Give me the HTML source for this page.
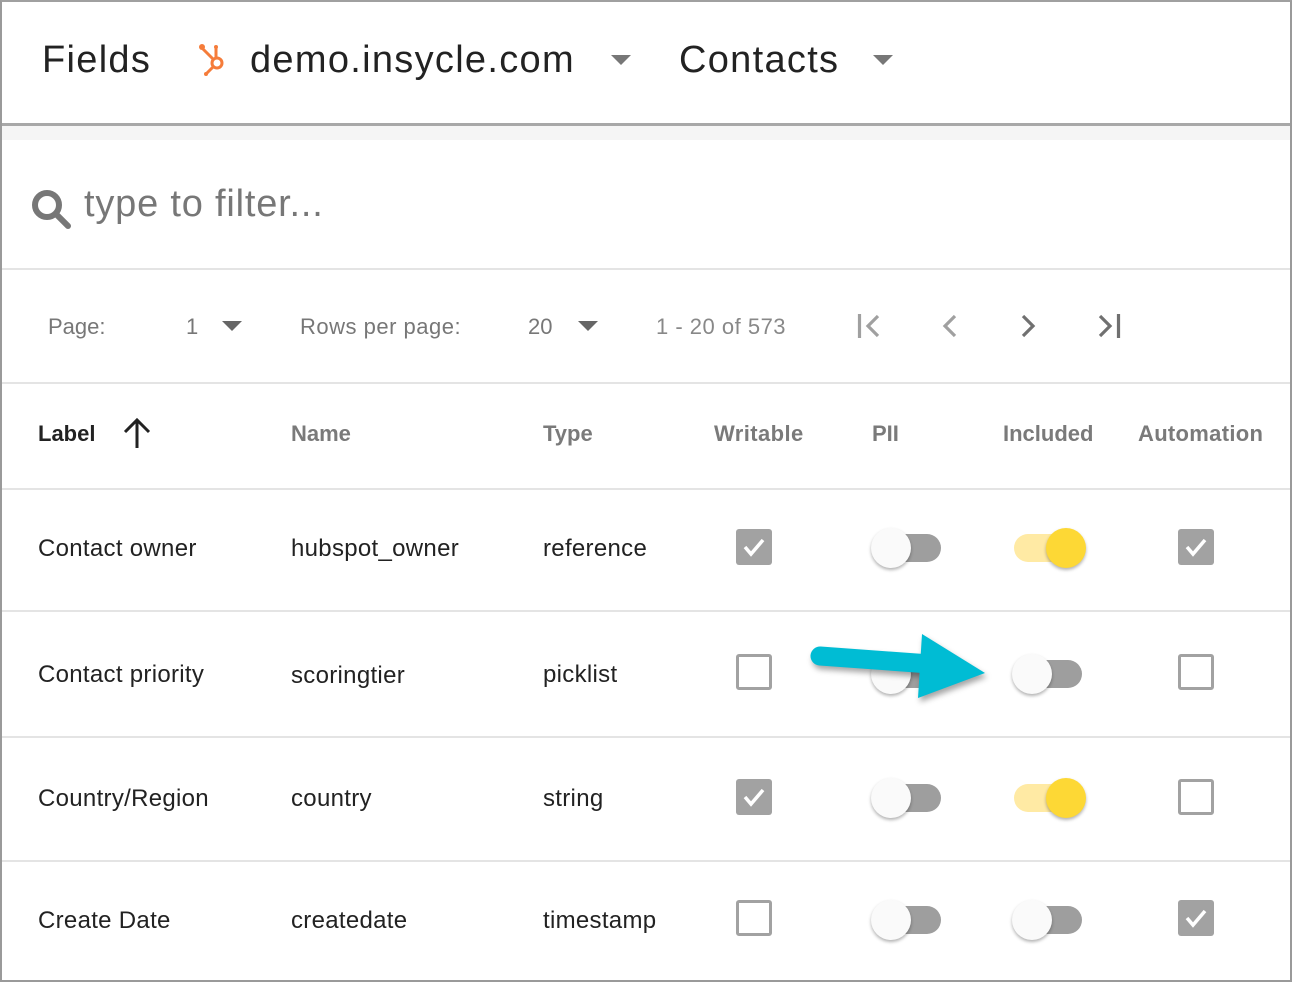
<!DOCTYPE html>
<html><head><meta charset="utf-8"><style>
*{margin:0;padding:0;box-sizing:border-box}
body{width:1292px;height:982px;background:#fff;font-family:"Liberation Sans",Arial,sans-serif;position:relative;overflow:hidden}
.frame{position:absolute;left:0;top:0;width:1292px;height:982px;border:2px solid #9a9a9a;border-top-color:#a0a0a0}
.a{position:absolute;white-space:nowrap}
.hl{position:absolute;left:2px;right:2px;height:2px;background:#e4e4e4}
.t{font-size:24px;color:#222;letter-spacing:0.3px}
.h{font-size:22px;font-weight:bold;color:#7a7a7a}
.cb{position:absolute;width:36px;height:36px;border-radius:3px}
.cb.on{background:#a2a2a2}
.cb.off{border:3px solid #a2a2a2;background:#fff}
.sw{position:absolute;width:70px;height:40px}
.sw .tr{position:absolute;left:2px;top:6px;width:68px;height:28px;border-radius:14px;background:#9e9e9e}
.sw .th{position:absolute;left:0;top:0;width:40px;height:40px;border-radius:50%;background:#fafafa;box-shadow:0 2px 3px rgba(0,0,0,.3)}
.sw.y .tr{background:#ffeaa4;left:0}
.sw.y .th{left:32px;background:#fdd835}
.big{font-size:38px;color:#222;letter-spacing:1.3px}
</style></head><body>
<div class="frame"></div>
<div class="a big" style="left:42px;top:39px">Fields</div>
<svg class="a" style="left:196px;top:40px" width="34" height="36" viewBox="0 0 34 36"><g stroke="#f57c3a" stroke-width="3" fill="none"><circle cx="21" cy="23" r="5"/><line x1="17" y1="19" x2="7" y2="9"/><line x1="20" y1="18" x2="20" y2="8"/><line x1="17" y1="27" x2="11" y2="33"/></g><circle cx="6" cy="7" r="3" fill="#f57c3a"/><circle cx="20" cy="7" r="2" fill="#f57c3a"/><circle cx="10" cy="34" r="2" fill="#f57c3a"/></svg>
<div class="a big" style="left:250px;top:39px">demo.insycle.com</div>
<div class="a" style="left:611px;top:55px;width:0;height:0;border-left:10px solid transparent;border-right:10px solid transparent;border-top:10px solid #777"></div>
<div class="a big" style="left:679px;top:39px">Contacts</div>
<div class="a" style="left:873px;top:55px;width:0;height:0;border-left:10px solid transparent;border-right:10px solid transparent;border-top:10px solid #777"></div>
<div class="a" style="left:2px;top:123px;width:1288px;height:3px;background:#a8a8a8"></div>
<div class="a" style="left:2px;top:126px;width:1288px;height:14px;background:#f5f5f5"></div>
<svg class="a" style="left:30px;top:188px" width="44" height="44" viewBox="0 0 44 44"><circle cx="17" cy="17" r="12" stroke="#777" stroke-width="6" fill="none"/><line x1="26" y1="26" x2="38" y2="38" stroke="#777" stroke-width="6" stroke-linecap="round"/></svg>
<div class="a" style="left:84px;top:183px;font-size:38px;color:#777;letter-spacing:0.8px">type to filter...</div>
<div class="hl" style="top:268px"></div>
<div class="a" style="left:48px;top:314px;font-size:22px;color:#777">Page:</div>
<div class="a" style="left:186px;top:314px;font-size:22px;color:#777">1</div>
<div class="a" style="left:222px;top:321px;width:0;height:0;border-left:10px solid transparent;border-right:10px solid transparent;border-top:10px solid #666"></div>
<div class="a" style="left:300px;top:314px;font-size:22px;color:#777;letter-spacing:0.5px">Rows per page:</div>
<div class="a" style="left:528px;top:314px;font-size:22px;color:#777">20</div>
<div class="a" style="left:578px;top:321px;width:0;height:0;border-left:10px solid transparent;border-right:10px solid transparent;border-top:10px solid #666"></div>
<div class="a" style="left:656px;top:314px;font-size:22px;color:#888;letter-spacing:0.5px">1 - 20 of 573</div>
<svg class="a" style="left:850px;top:310px" width="280" height="32" viewBox="0 0 280 32"><g fill="none" stroke-width="3.2"><g stroke="#a0a0a0"><line x1="9.5" y1="4" x2="9.5" y2="28"/><polyline points="28,6 18,16 28,26"/><polyline points="105,6 95,16 105,26"/></g><g stroke="#707070"><polyline points="173,6 183,16 173,26"/><polyline points="250,6 260,16 250,26"/><line x1="268.5" y1="4" x2="268.5" y2="28"/></g></g></svg>
<div class="hl" style="top:382px"></div>
<div class="a" style="left:38px;top:421px;font-size:22px;font-weight:bold;color:#222">Label</div>
<svg class="a" style="left:120px;top:416px" width="34" height="34" viewBox="0 0 34 34"><g stroke="#222" stroke-width="3" fill="none"><line x1="17" y1="4" x2="17" y2="32"/><polyline points="5,16 17,4 29,16"/></g></svg>
<div class="a h" style="left:291px;top:421px">Name</div>
<div class="a h" style="left:543px;top:421px">Type</div>
<div class="a h" style="left:714px;top:421px;letter-spacing:0.4px">Writable</div>
<div class="a h" style="left:872px;top:421px">PII</div>
<div class="a h" style="left:1003px;top:421px">Included</div>
<div class="a h" style="left:1138px;top:421px;letter-spacing:0.3px">Automation</div>
<div class="hl" style="top:488px"></div>
<div class="a t" style="left:38px;top:535px">Contact owner</div>
<div class="a t" style="left:291px;top:535px">hubspot_owner</div>
<div class="a t" style="left:543px;top:535px">reference</div>
<div class="cb on" style="left:736px;top:529px"><svg width="36" height="36"><polyline points="9,18 15,25 27,11" stroke="#fff" stroke-width="3.5" fill="none"/></svg></div>
<div class="sw" style="left:871px;top:528px"><div class="tr"></div><div class="th"></div></div>
<div class="sw y" style="left:1014px;top:528px"><div class="tr"></div><div class="th"></div></div>
<div class="cb on" style="left:1178px;top:529px"><svg width="36" height="36"><polyline points="9,18 15,25 27,11" stroke="#fff" stroke-width="3.5" fill="none"/></svg></div>
<div class="hl" style="top:610px"></div>
<div class="a t" style="left:38px;top:661px">Contact priority</div>
<div class="a t" style="left:291px;top:662px">scoringtier</div>
<div class="a t" style="left:543px;top:661px">picklist</div>
<div class="cb off" style="left:736px;top:654px"></div>
<div class="sw" style="left:871px;top:654px"><div class="tr"></div><div class="th"></div></div>
<div class="sw" style="left:1012px;top:654px"><div class="tr"></div><div class="th"></div></div>
<div class="cb off" style="left:1178px;top:654px"></div>
<svg class="a" style="left:800px;top:625px;filter:drop-shadow(2px 4px 3px rgba(0,0,0,.35))" width="200" height="90" viewBox="0 0 200 90"><line x1="20" y1="31" x2="130" y2="39" stroke="#00bcd4" stroke-width="19" stroke-linecap="round"/><polygon points="122,9 185,48 118,73" fill="#00bcd4"/></svg>
<div class="hl" style="top:736px"></div>
<div class="a t" style="left:38px;top:785px">Country/Region</div>
<div class="a t" style="left:291px;top:785px">country</div>
<div class="a t" style="left:543px;top:785px">string</div>
<div class="cb on" style="left:736px;top:779px"><svg width="36" height="36"><polyline points="9,18 15,25 27,11" stroke="#fff" stroke-width="3.5" fill="none"/></svg></div>
<div class="sw" style="left:871px;top:778px"><div class="tr"></div><div class="th"></div></div>
<div class="sw y" style="left:1014px;top:778px"><div class="tr"></div><div class="th"></div></div>
<div class="cb off" style="left:1178px;top:779px"></div>
<div class="hl" style="top:860px"></div>
<div class="a t" style="left:38px;top:907px">Create Date</div>
<div class="a t" style="left:291px;top:907px">createdate</div>
<div class="a t" style="left:543px;top:907px">timestamp</div>
<div class="cb off" style="left:736px;top:900px"></div>
<div class="sw" style="left:871px;top:900px"><div class="tr"></div><div class="th"></div></div>
<div class="sw" style="left:1012px;top:900px"><div class="tr"></div><div class="th"></div></div>
<div class="cb on" style="left:1178px;top:900px"><svg width="36" height="36"><polyline points="9,18 15,25 27,11" stroke="#fff" stroke-width="3.5" fill="none"/></svg></div>
</body></html>
